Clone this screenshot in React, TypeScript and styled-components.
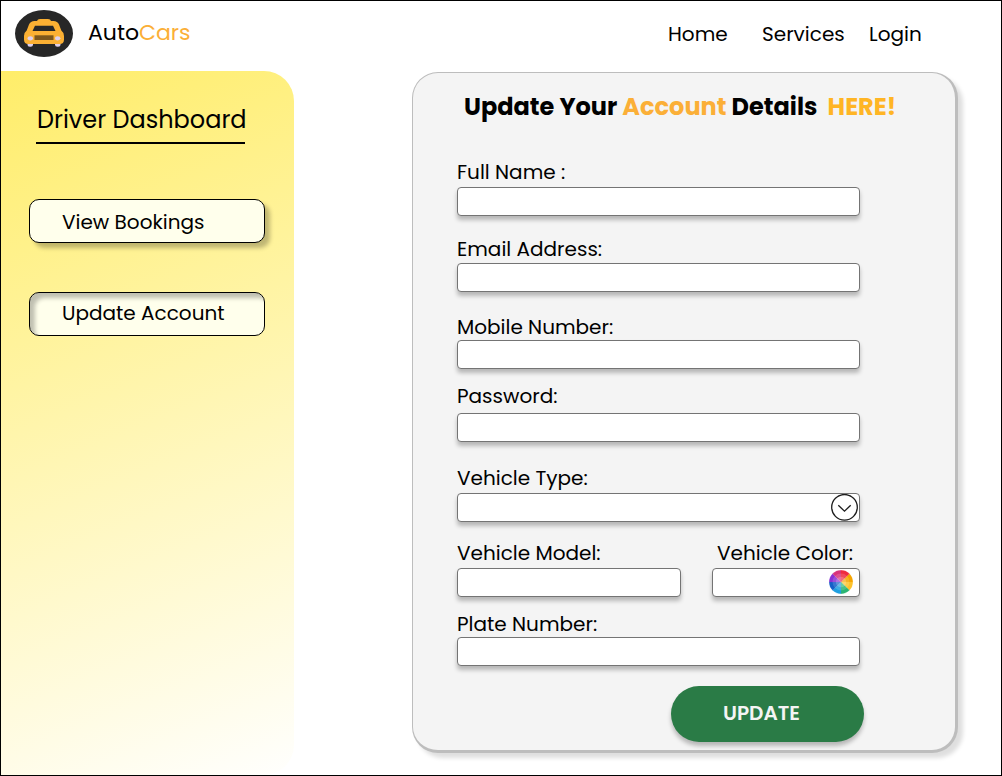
import React from "react";
import styled, { createGlobalStyle } from "styled-components";

const GlobalStyle = createGlobalStyle`
  *, *::before, *::after { box-sizing: border-box; }
  body { margin: 0; background: #fff; }
`;

const Page = styled.div`
  width: 1002px;
  height: 776px;
  border: 1px solid #000;
  background: #fff;
  color: #000;
  font-family: Poppins, Inter, sans-serif;
  font-size: 20px;
  line-height: 20px;
  overflow: hidden;
  display: flex;
  flex-direction: column;
`;

const Header = styled.header`
  height: 70px;
  flex: none;
  display: flex;
  align-items: flex-start;
  padding: 9px 80px 0 14px;
`;

const Brand = styled.div`
  margin: 13px 0 0 15px;
  font-size: 22px;
`;

const Accent = styled.span<{ $color?: string }>`
  color: ${(p) => p.$color ?? "#fbaf37"};
`;

const Nav = styled.nav`
  display: flex;
  margin: 14px 0 0 auto;
`;

const NavLink = styled.a<{ $width: number }>`
  width: ${(p) => p.$width}px;
  white-space: nowrap;
`;

const Body = styled.div`
  flex: 1;
  display: flex;
  align-items: flex-start;
`;

const Sidebar = styled.aside`
  width: 293px;
  height: 704px;
  padding: 36px 28px 0;
  border-radius: 0 30px 30px 0;
  background: linear-gradient(158deg, #ffed69 0%, #fff 101%);
`;

const SidebarTitle = styled.h2`
  width: 209px;
  height: 37px;
  margin: 0 0 55px 7px;
  padding-left: 1px;
  border-bottom: 2px solid #000;
  font-size: 24px;
  font-weight: 400;
  line-height: 26px;
  white-space: nowrap;
`;

const MenuButton = styled.button<{ $pressed?: boolean }>`
  display: block;
  width: 236px;
  height: 44px;
  margin: 0 0 49px;
  padding: ${(p) => (p.$pressed ? "0 0 2px 32px" : "2px 0 0 32px")};
  border: 1px solid #000;
  border-radius: 10px;
  background: #ffffec;
  box-shadow: ${(p) =>
    p.$pressed
      ? "inset 5px 5px 4px rgba(0, 0, 0, 0.25)"
      : "5px 5px 4px rgba(0, 0, 0, 0.25)"};
  color: #000;
  font: inherit;
  text-align: left;
`;

const Card = styled.form`
  width: 546px;
  height: 681px;
  margin: 1px 0 0 118px;
  padding: 21px 0 0 44px;
  border: 1px solid #bdbdbd;
  border-right-width: 3px;
  border-bottom-width: 3px;
  border-radius: 26px;
  background: #f4f4f4;
  box-shadow: 5px 5px 4px rgba(0, 0, 0, 0.13);
`;

const CardTitle = styled.h1`
  height: 68px;
  margin: 0 0 0 7px;
  font-size: 24px;
  font-weight: 700;
  line-height: 26px;
  white-space: pre;
`;

const Field = styled.label<{ $top?: number; $gap: number; $width?: number }>`
  display: flex;
  flex-direction: column;
  gap: ${(p) => p.$gap}px;
  width: ${(p) => p.$width ?? 403}px;
  margin-top: ${(p) => p.$top ?? 0}px;
`;

const Label = styled.span<{ $indent?: number }>`
  height: 20px;
  padding-left: ${(p) => p.$indent ?? 0}px;
  white-space: nowrap;
`;

const Control = styled.span`
  display: flex;
  align-items: center;
  height: 29px;
  border: 1px solid #747474;
  border-radius: 4px;
  background: #fff;
  box-shadow: 0 4px 4px rgba(0, 0, 0, 0.25);
`;

const Input = styled.input`
  flex: 1;
  min-width: 0;
  height: 100%;
  padding: 0 8px;
  border: 0;
  outline: 0;
  background: transparent;
  font: inherit;
`;

const FieldRow = styled.div`
  display: flex;
  gap: 31px;
  margin-top: 21px;
`;

const Submit = styled.button`
  display: block;
  width: 193px;
  height: 56px;
  margin: 20px 0 0 214px;
  padding: 0 12px 2px 0;
  border: 0;
  border-radius: 28px;
  background: #2a7b46;
  box-shadow: 0 4px 4px rgba(0, 0, 0, 0.25);
  color: #f4f4f4;
  font: inherit;
  font-weight: 600;
`;

const Logo = () => (
  <svg width="58" height="47" viewBox="0 0 58 47" aria-hidden="true">
    <ellipse cx="29" cy="23.5" rx="29" ry="23.5" fill="#272727" />
    <rect x="12.500" y="31" width="5.500" height="5.700" rx="2.500" fill="#ddd0ee" />
    <rect x="40" y="31" width="5.500" height="5.700" rx="2.500" fill="#ddd0ee" />
    <path
      d="M22 11Q22.500 9 25 9H33Q35.500 9 36 11H38.500Q42.500 11 44 14.500L46.300 20.500Q49 22.500 49 26V29.500Q49 34 44.500 34H13.500Q9 34 9 29.500V26Q9 22.500 11.700 20.500L14 14.500Q15.500 11 19.500 11Z"
      fill="#fbb033"
    />
    <path d="M20 15.700H38L40.500 21H17.500Z" fill="#272727" />
    <rect x="19.500" y="25.300" width="19" height="4.700" fill="#7d571c" />
    <ellipse cx="15.300" cy="28.300" rx="2.700" ry="2.100" fill="#ddd0ee" />
    <ellipse cx="42.700" cy="28.300" rx="2.700" ry="2.100" fill="#ddd0ee" />
  </svg>
);

const ChevronIcon = styled.svg`
  flex: none;
  margin-right: 1px;
`;

const Chevron = () => (
  <ChevronIcon width="27" height="27" viewBox="0 0 27 27" fill="none" stroke="#1e1e1e" aria-hidden="true">
    <circle cx="13.500" cy="13.300" r="12.800" strokeWidth="1.300" />
    <path d="M7.300 11.300L13.500 17.200L19.700 11.300" strokeWidth="1.300" />
  </ChevronIcon>
);

const SECTORS = [
  { start: -45, color: "#f6a500" },
  { start: 0, color: "#fdc32c" },
  { start: 45, color: "#2bb573" },
  { start: 90, color: "#1e9fe0" },
  { start: 135, color: "#1560c8" },
  { start: 180, color: "#8a32d4" },
  { start: 225, color: "#d9347c" },
  { start: 270, color: "#ef2b3f" },
];

const point = (angle: number, r: number) => {
  const a = (angle * Math.PI) / 180;
  return `${(12 + r * Math.cos(a)).toFixed(2)} ${(12 + r * Math.sin(a)).toFixed(2)}`;
};

const WheelIcon = styled.svg`
  flex: none;
  margin: 0 6px 1px 0;
`;

const ColorWheel = () => (
  <WheelIcon width="24" height="24" viewBox="0 0 24 24" aria-hidden="true">
    {SECTORS.map(({ start, color }) => (
      <path
        key={start}
        d={`M12 12L${point(start, 11.8)}A11.8 11.8 0 0 1 ${point(start + 45, 11.8)}Z`}
        fill={color}
        stroke={color}
        strokeWidth="0.2"
      />
    ))}
    <circle cx="12" cy="12" r="8.500" fill="#fff" opacity=".15" />
    <circle cx="12" cy="12" r="5.200" fill="#fff" opacity=".2" />
  </WheelIcon>
);

export default function App() {
  return (
    <Page>
      <GlobalStyle />
      <Header>
        <Logo />
        <Brand>
          Auto<Accent>Cars</Accent>
        </Brand>
        <Nav>
          <NavLink $width={94}>Home</NavLink>
          <NavLink $width={107}>Services</NavLink>
          <NavLink $width={52}>Login</NavLink>
        </Nav>
      </Header>
      <Body>
        <Sidebar>
          <SidebarTitle>Driver Dashboard</SidebarTitle>
          <MenuButton type="button">View Bookings</MenuButton>
          <MenuButton type="button" $pressed>Update Account</MenuButton>
        </Sidebar>
        <Card>
          <CardTitle>
            Update Your <Accent>Account</Accent> Details{"  "}
            <Accent $color="#ffb524">HERE!</Accent>
          </CardTitle>
          <Field $gap={5}>
            <Label>Full Name :</Label>
            <Control><Input /></Control>
          </Field>
          <Field $top={23} $gap={4}>
            <Label>Email Address:</Label>
            <Control><Input /></Control>
          </Field>
          <Field $top={25} $gap={3}>
            <Label>Mobile Number:</Label>
            <Control><Input /></Control>
          </Field>
          <Field $top={17} $gap={7}>
            <Label>Password:</Label>
            <Control><Input type="password" /></Control>
          </Field>
          <Field $top={26} $gap={5}>
            <Label>Vehicle Type:</Label>
            <Control><Input /><Chevron /></Control>
          </Field>
          <FieldRow>
            <Field $gap={5} $width={224}>
              <Label>Vehicle Model:</Label>
              <Control><Input /></Control>
            </Field>
            <Field $gap={5} $width={148}>
              <Label $indent={5}>Vehicle Color:</Label>
              <Control><Input /><ColorWheel /></Control>
            </Field>
          </FieldRow>
          <Field $top={17} $gap={3}>
            <Label>Plate Number:</Label>
            <Control><Input /></Control>
          </Field>
          <Submit type="button">UPDATE</Submit>
        </Card>
      </Body>
    </Page>
  );
}
